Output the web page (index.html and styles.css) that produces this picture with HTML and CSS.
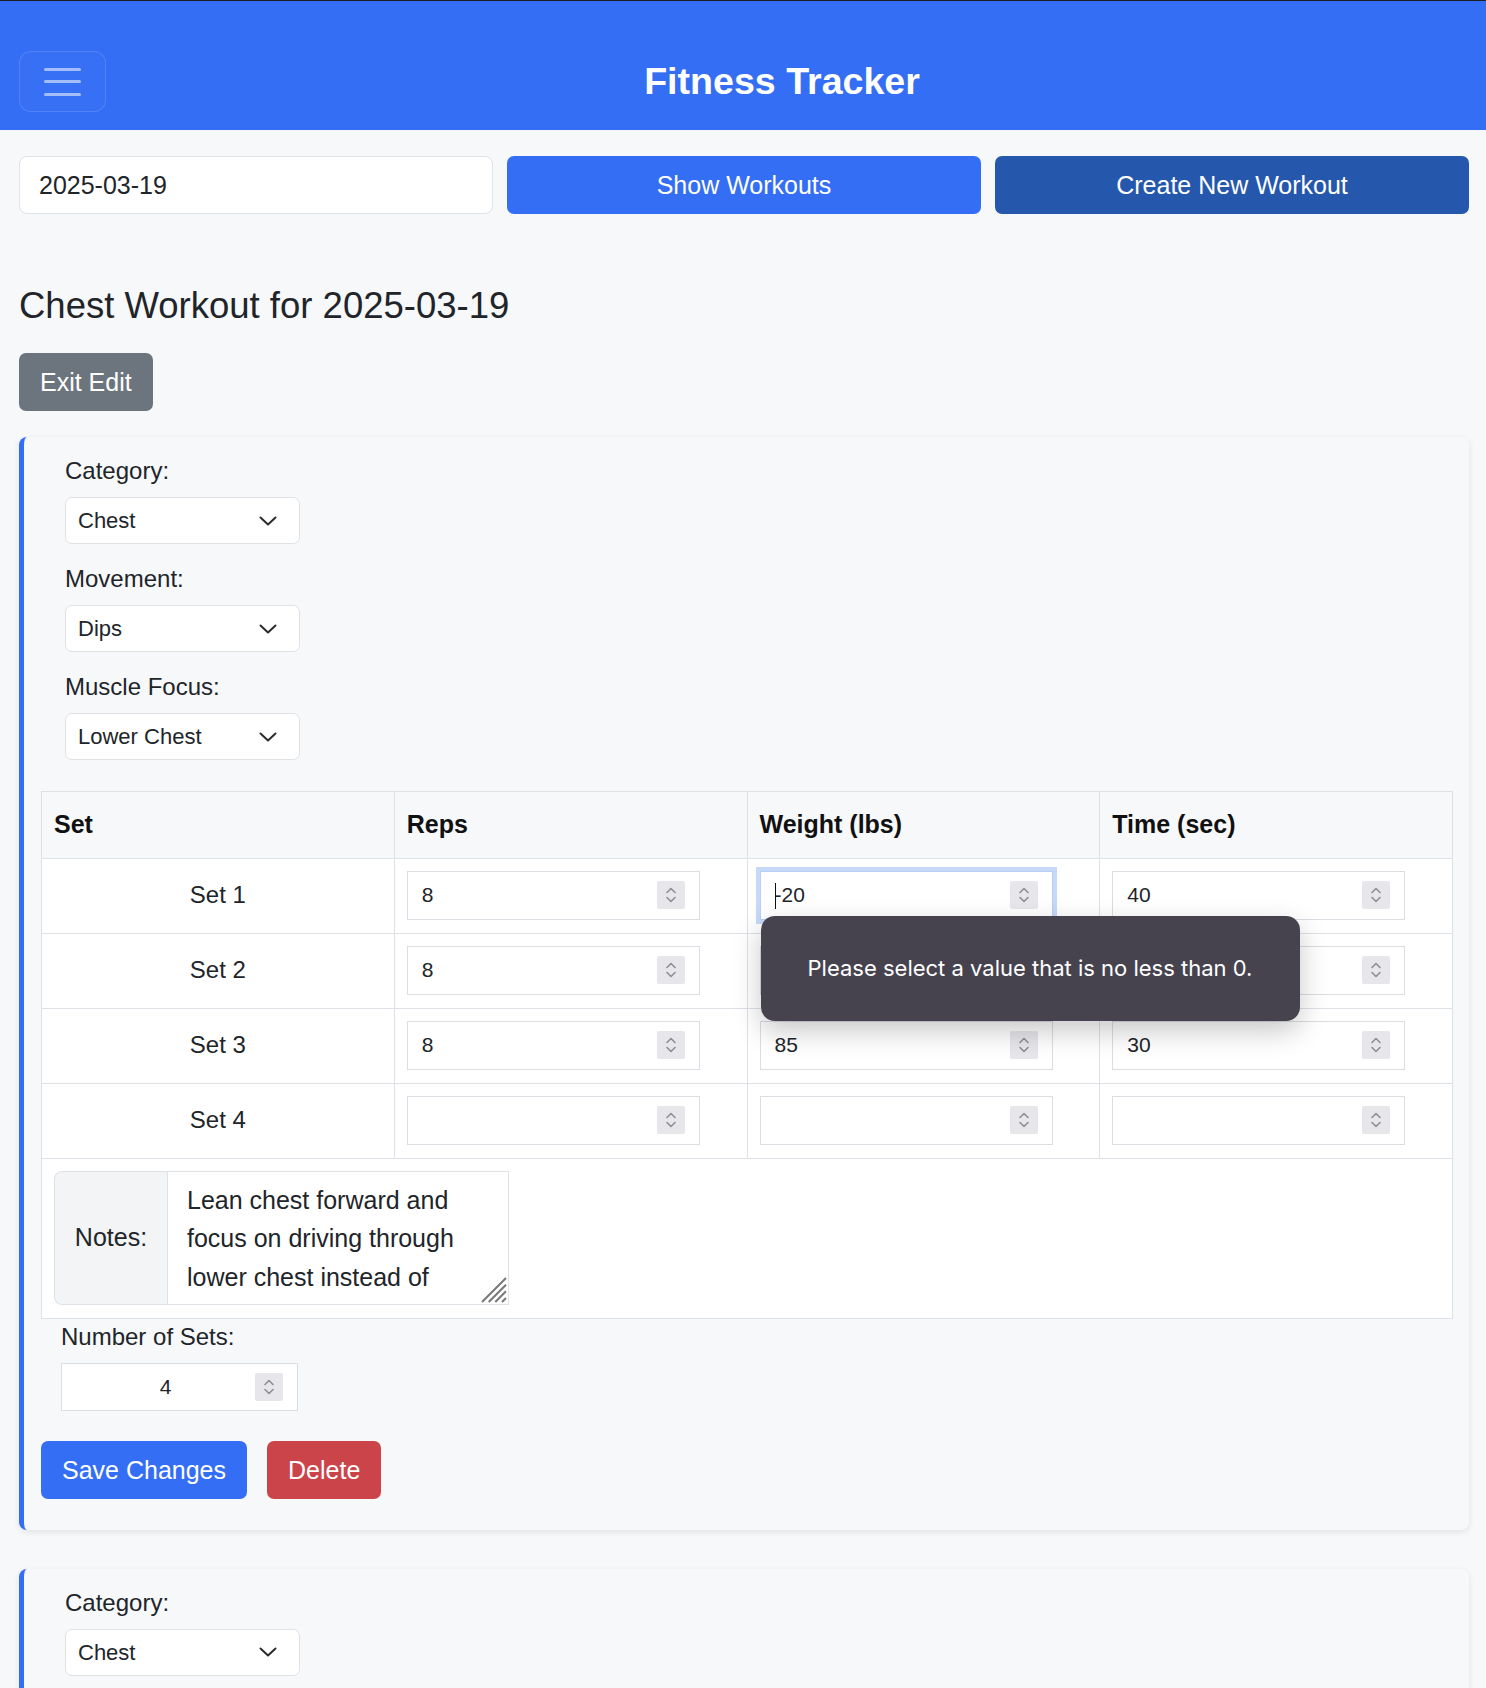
FILE: index.html
```html
<!DOCTYPE html>
<html lang="en">
<head>
<meta charset="utf-8">
<title>Fitness Tracker</title>
<link rel="stylesheet" href="styles.css">
</head>
<body>
<header class="topbar">
  <button class="menu-btn" aria-label="Menu">
    <span class="bar"></span><span class="bar"></span><span class="bar"></span>
  </button>
  <h1 class="app-title">Fitness Tracker</h1>
</header>

<main class="page">
  <div class="controls">
    <input class="date-input" type="text" value="2025-03-19">
    <button class="btn btn-primary">Show Workouts</button>
    <button class="btn btn-navy">Create New Workout</button>
  </div>

  <h2 class="day-title">Chest Workout for 2025-03-19</h2>
  <button class="btn btn-secondary btn-exit">Exit Edit</button>

  <section class="workout-card">
    <div class="field">
      <label class="field-label">Category:</label>
      <div class="select">
        <select><option>Chest</option></select>
        <svg class="chev" viewBox="0 0 18 10"><path d="M1.5 1.5 9 8.5 16.5 1.5" fill="none" stroke="#2b2b2b" stroke-width="2" stroke-linecap="round" stroke-linejoin="round"/></svg>
      </div>
    </div>
    <div class="field">
      <label class="field-label">Movement:</label>
      <div class="select">
        <select><option>Dips</option></select>
        <svg class="chev" viewBox="0 0 18 10"><path d="M1.5 1.5 9 8.5 16.5 1.5" fill="none" stroke="#2b2b2b" stroke-width="2" stroke-linecap="round" stroke-linejoin="round"/></svg>
      </div>
    </div>
    <div class="field">
      <label class="field-label">Muscle Focus:</label>
      <div class="select">
        <select><option>Lower Chest</option></select>
        <svg class="chev" viewBox="0 0 18 10"><path d="M1.5 1.5 9 8.5 16.5 1.5" fill="none" stroke="#2b2b2b" stroke-width="2" stroke-linecap="round" stroke-linejoin="round"/></svg>
      </div>
    </div>

    <table class="sets-table">
      <thead>
        <tr><th>Set</th><th>Reps</th><th>Weight (lbs)</th><th>Time (sec)</th></tr>
      </thead>
      <tbody>
        <tr>
          <td class="set-name">Set 1</td>
          <td><div class="num"><input type="number" value="8"><svg class="spin" viewBox="0 0 28 28"><rect width="28" height="28" rx="2" fill="#e6e6eb"/><path d="M10 11.5 14 7.5 18 11.5M10 16.5 14 20.5 18 16.5" fill="none" stroke="#8e8e93" stroke-width="1.6" stroke-linecap="round" stroke-linejoin="round"/></svg></div></td>
          <td><div class="num focused"><input type="number" value="-20" min="0"><span class="caret"></span><svg class="spin" viewBox="0 0 28 28"><rect width="28" height="28" rx="2" fill="#e6e6eb"/><path d="M10 11.5 14 7.5 18 11.5M10 16.5 14 20.5 18 16.5" fill="none" stroke="#8e8e93" stroke-width="1.6" stroke-linecap="round" stroke-linejoin="round"/></svg>
            <div class="tooltip">Please select a value that is no less than 0.</div></div></td>
          <td><div class="num"><input type="number" value="40"><svg class="spin" viewBox="0 0 28 28"><rect width="28" height="28" rx="2" fill="#e6e6eb"/><path d="M10 11.5 14 7.5 18 11.5M10 16.5 14 20.5 18 16.5" fill="none" stroke="#8e8e93" stroke-width="1.6" stroke-linecap="round" stroke-linejoin="round"/></svg></div></td>
        </tr>
        <tr>
          <td class="set-name">Set 2</td>
          <td><div class="num"><input type="number" value="8"><svg class="spin" viewBox="0 0 28 28"><rect width="28" height="28" rx="2" fill="#e6e6eb"/><path d="M10 11.5 14 7.5 18 11.5M10 16.5 14 20.5 18 16.5" fill="none" stroke="#8e8e93" stroke-width="1.6" stroke-linecap="round" stroke-linejoin="round"/></svg></div></td>
          <td><div class="num"><input type="number" value="85"><svg class="spin" viewBox="0 0 28 28"><rect width="28" height="28" rx="2" fill="#e6e6eb"/><path d="M10 11.5 14 7.5 18 11.5M10 16.5 14 20.5 18 16.5" fill="none" stroke="#8e8e93" stroke-width="1.6" stroke-linecap="round" stroke-linejoin="round"/></svg></div></td>
          <td><div class="num"><input type="number" value="35"><svg class="spin" viewBox="0 0 28 28"><rect width="28" height="28" rx="2" fill="#e6e6eb"/><path d="M10 11.5 14 7.5 18 11.5M10 16.5 14 20.5 18 16.5" fill="none" stroke="#8e8e93" stroke-width="1.6" stroke-linecap="round" stroke-linejoin="round"/></svg></div></td>
        </tr>
        <tr>
          <td class="set-name">Set 3</td>
          <td><div class="num"><input type="number" value="8"><svg class="spin" viewBox="0 0 28 28"><rect width="28" height="28" rx="2" fill="#e6e6eb"/><path d="M10 11.5 14 7.5 18 11.5M10 16.5 14 20.5 18 16.5" fill="none" stroke="#8e8e93" stroke-width="1.6" stroke-linecap="round" stroke-linejoin="round"/></svg></div></td>
          <td><div class="num"><input type="number" value="85"><svg class="spin" viewBox="0 0 28 28"><rect width="28" height="28" rx="2" fill="#e6e6eb"/><path d="M10 11.5 14 7.5 18 11.5M10 16.5 14 20.5 18 16.5" fill="none" stroke="#8e8e93" stroke-width="1.6" stroke-linecap="round" stroke-linejoin="round"/></svg></div></td>
          <td><div class="num"><input type="number" value="30"><svg class="spin" viewBox="0 0 28 28"><rect width="28" height="28" rx="2" fill="#e6e6eb"/><path d="M10 11.5 14 7.5 18 11.5M10 16.5 14 20.5 18 16.5" fill="none" stroke="#8e8e93" stroke-width="1.6" stroke-linecap="round" stroke-linejoin="round"/></svg></div></td>
        </tr>
        <tr>
          <td class="set-name">Set 4</td>
          <td><div class="num"><input type="number" value=""><svg class="spin" viewBox="0 0 28 28"><rect width="28" height="28" rx="2" fill="#e6e6eb"/><path d="M10 11.5 14 7.5 18 11.5M10 16.5 14 20.5 18 16.5" fill="none" stroke="#8e8e93" stroke-width="1.6" stroke-linecap="round" stroke-linejoin="round"/></svg></div></td>
          <td><div class="num"><input type="number" value=""><svg class="spin" viewBox="0 0 28 28"><rect width="28" height="28" rx="2" fill="#e6e6eb"/><path d="M10 11.5 14 7.5 18 11.5M10 16.5 14 20.5 18 16.5" fill="none" stroke="#8e8e93" stroke-width="1.6" stroke-linecap="round" stroke-linejoin="round"/></svg></div></td>
          <td><div class="num"><input type="number" value=""><svg class="spin" viewBox="0 0 28 28"><rect width="28" height="28" rx="2" fill="#e6e6eb"/><path d="M10 11.5 14 7.5 18 11.5M10 16.5 14 20.5 18 16.5" fill="none" stroke="#8e8e93" stroke-width="1.6" stroke-linecap="round" stroke-linejoin="round"/></svg></div></td>
        </tr>
        <tr class="notes-row">
          <td colspan="4">
            <div class="notes-group">
              <span class="notes-label">Notes:</span>
              <textarea class="notes-text">Lean chest forward and focus on driving through lower chest instead of triceps. Keep elbows slightly flared.</textarea>
              <svg class="grip" viewBox="0 0 26 26"><path d="M1 25 25 1M7.7 25 25 7.7M14.3 25 25 14.3M21 25 25 21" fill="none" stroke="#787878" stroke-width="2"/></svg>
            </div>
          </td>
        </tr>
      </tbody>
    </table>

    <div class="sets-count">
      <label class="field-label">Number of Sets:</label>
      <div class="num count"><input type="number" value="4"><svg class="spin" viewBox="0 0 28 28"><rect width="28" height="28" rx="2" fill="#e6e6eb"/><path d="M10 11.5 14 7.5 18 11.5M10 16.5 14 20.5 18 16.5" fill="none" stroke="#8e8e93" stroke-width="1.6" stroke-linecap="round" stroke-linejoin="round"/></svg></div>
    </div>

    <div class="actions">
      <button class="btn btn-primary">Save Changes</button>
      <button class="btn btn-danger">Delete</button>
    </div>
  </section>

  <section class="workout-card">
    <div class="field">
      <label class="field-label">Category:</label>
      <div class="select">
        <select><option>Chest</option></select>
        <svg class="chev" viewBox="0 0 18 10"><path d="M1.5 1.5 9 8.5 16.5 1.5" fill="none" stroke="#2b2b2b" stroke-width="2" stroke-linecap="round" stroke-linejoin="round"/></svg>
      </div>
    </div>
  </section>
</main>
</body>
</html>
```

FILE: styles.css
```css
* { box-sizing: border-box; }

html, body { margin: 0; }

body {
  background: #f7f8fa;
  color: #212529;
  font-family: "Liberation Sans", Arial, sans-serif;
  font-size: 25px;
  line-height: 1.5;
}

/* Header */
.topbar {
  display: flex;
  align-items: center;
  background: #346ef5;
  border-top: 1px solid #1d1d1f;
  padding: 50px 28px 18px 19px;
}

.menu-btn {
  width: 87px;
  height: 61px;
  flex: none;
  display: flex;
  flex-direction: column;
  align-items: center;
  justify-content: center;
  gap: 9.5px;
  padding: 0;
  background: rgba(255, 255, 255, 0.02);
  border: 1px solid rgba(255, 255, 255, 0.13);
  border-radius: 12px;
}

.menu-btn .bar {
  display: block;
  width: 37px;
  height: 3px;
  border-radius: 2px;
  background: rgba(255, 255, 255, 0.55);
}

.app-title {
  flex: 1;
  margin: 0;
  text-align: center;
  color: #fff;
  font-size: 37.6px;
  font-weight: 700;
  line-height: 1.2;
}

/* Page */
.page {
  padding: 26px 17px 0 19px;
}

.controls {
  display: grid;
  grid-template-columns: repeat(3, 1fr);
  gap: 14px;
}

.date-input {
  height: 58px;
  min-width: 0;
  padding: 0 19px;
  background: #fff;
  border: 1px solid #dfe2e6;
  border-radius: 8px;
  color: #212529;
  font: 25px "Liberation Sans", Arial, sans-serif;
}

.btn {
  padding: 10px 21px;
  border: none;
  border-radius: 7px;
  color: #fff;
  font: 25px/38px "Liberation Sans", Arial, sans-serif;
  cursor: pointer;
}

.btn-primary { background: #346ef5; }
.btn-navy { background: #2557ad; }
.btn-secondary { background: #6c757d; }
.btn-danger { background: #cb444a; }

.day-title {
  margin: 70px 0 25px;
  font-size: 36.5px;
  font-weight: 400;
  line-height: 44px;
}

.btn-exit { display: block; }

/* Card */
.workout-card {
  margin-top: 26px;
  padding: 16px 16px 31px 17px;
  background: #f7f8fa;
  border-left: 5px solid #346ef5;
  border-radius: 8px;
  box-shadow: 0 2px 6px rgba(0, 0, 0, 0.09);
}

.workout-card + .workout-card { margin-top: 39px; }

.field {
  margin: 0 0 17px 24px;
}

.field-label {
  display: block;
  margin-bottom: 8px;
  font-size: 24px;
  line-height: 36px;
}

.select {
  display: flex;
  align-items: center;
  width: 235px;
  height: 47px;
  background: #fff;
  border: 1px solid #dfe1e5;
  border-radius: 7px;
}

.select select {
  flex: 1;
  min-width: 0;
  height: 100%;
  padding: 0 0 0 12px;
  -webkit-appearance: none;
  appearance: none;
  background: transparent;
  border: none;
  outline: none;
  color: #212529;
  font: 22px "Liberation Sans", Arial, sans-serif;
}

.chev {
  flex: none;
  width: 18px;
  height: 10px;
  margin-right: 22px;
}

/* Table */
.sets-table {
  width: 100%;
  margin-top: 31px;
  border-collapse: collapse;
  table-layout: fixed;
  background: #fff;
}

.sets-table th,
.sets-table td {
  border: 1px solid #dee2e6;
}

.sets-table th {
  padding: 14px 12px;
  background: #f7f8fa;
  text-align: left;
  font-size: 25px;
  font-weight: 700;
  line-height: 37.5px;
  color: #111;
}

.sets-table td {
  padding: 12px 12px 13px;
  vertical-align: middle;
}

.set-name {
  text-align: center;
  font-size: 24px;
}

.num {
  position: relative;
  display: flex;
  align-items: center;
  width: 293px;
  height: 49px;
  background: #fff;
  border: 1px solid #dcdde2;
}

.num input {
  flex: 1;
  min-width: 0;
  height: 100%;
  padding: 0 0 0 14px;
  background: transparent;
  border: none;
  outline: none;
  color: #212529;
  font: 21px "Liberation Sans", Arial, sans-serif;
  -moz-appearance: textfield;
  appearance: textfield;
}

.num input::-webkit-inner-spin-button,
.num input::-webkit-outer-spin-button {
  -webkit-appearance: none;
  margin: 0;
}

.spin {
  flex: none;
  width: 28px;
  height: 28px;
  margin-right: 14px;
}

.num.focused {
  border-color: #b9cff5;
  box-shadow: 0 0 0 4px #c6d9f8;
}

.caret {
  position: absolute;
  left: 14px;
  top: 11px;
  width: 1.5px;
  height: 26px;
  background: #111;
}

.tooltip {
  position: absolute;
  left: 0;
  top: 44px;
  z-index: 5;
  width: 539px;
  height: 105px;
  display: flex;
  align-items: center;
  justify-content: center;
  background: #46434f;
  color: #fff;
  border-radius: 14px;
  box-shadow: 0 10px 28px rgba(0, 0, 0, 0.22);
  font: 22px/1.2 Inter, "Noto Sans", sans-serif;
}

/* Notes */
.notes-group {
  position: relative;
  display: flex;
  width: 455px;
  height: 134px;
}

.notes-label {
  flex: none;
  width: 113px;
  display: flex;
  align-items: center;
  justify-content: center;
  background: #f3f4f6;
  border: 1px solid #dee2e6;
  border-right: none;
  border-radius: 8px 0 0 8px;
  font-size: 25px;
}

.notes-text {
  flex: 1;
  min-width: 0;
  height: 100%;
  padding: 9px 19px;
  overflow: hidden;
  resize: none;
  background: #fff;
  border: 1px solid #dee2e6;
  border-radius: 0;
  color: #212529;
  font: 25px/38.5px "Liberation Sans", Arial, sans-serif;
}

.grip {
  position: absolute;
  right: 2px;
  bottom: 2px;
  width: 26px;
  height: 26px;
  pointer-events: none;
}

/* Number of sets */
.sets-count {
  margin-left: 20px;
}

.num.count {
  width: 237px;
  height: 48px;
}

.num.count input {
  text-align: center;
}

.actions {
  display: flex;
  gap: 20px;
  margin-top: 30px;
}
```
